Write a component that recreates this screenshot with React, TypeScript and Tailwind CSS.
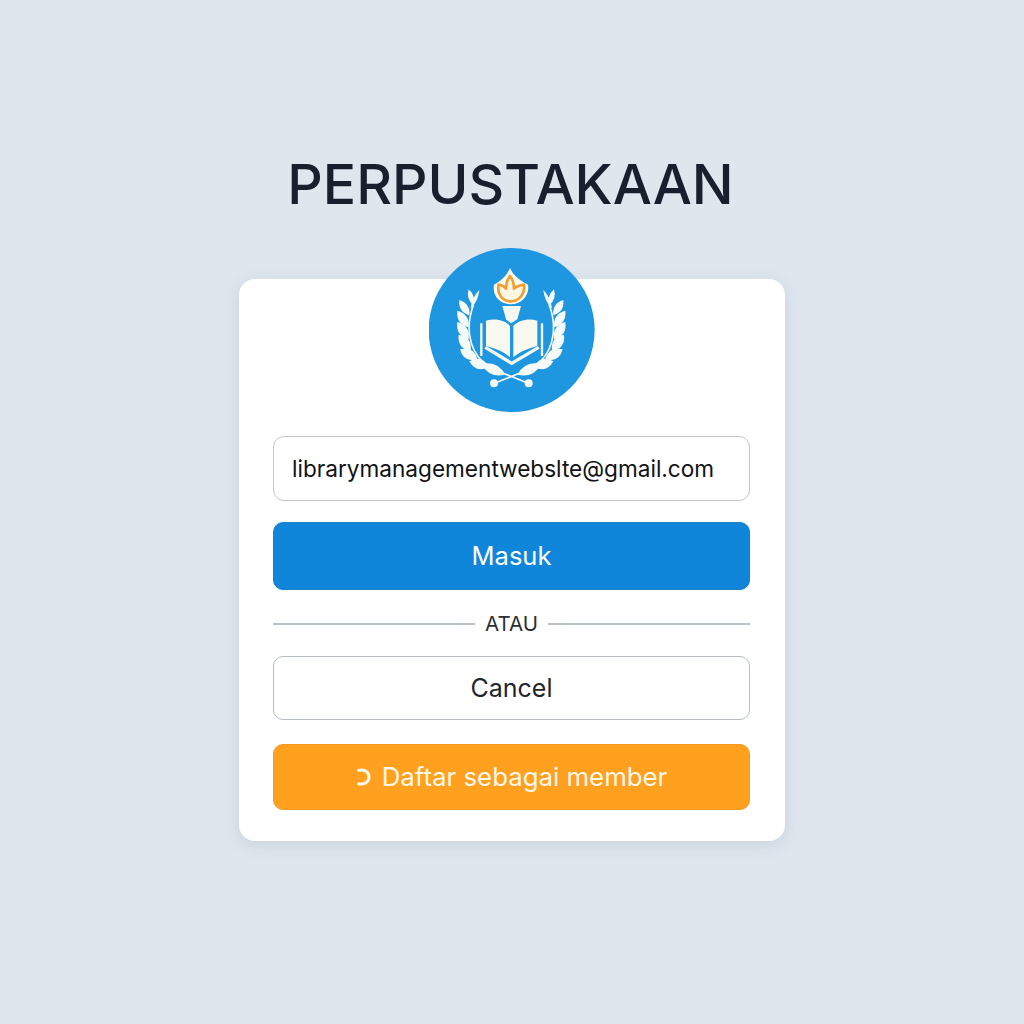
import React from 'react';

// base x, base y, tip x, tip y, half width
const leaves: number[][] = [
  [160, 196, 146, 148, 10],
  [152, 206, 178, 150, 7],
  [148, 226, 118, 180, 14],
  [146, 262, 112, 212, 16],
  [146, 298, 112, 246, 17],
  [152, 332, 116, 284, 18],
  [172, 358, 120, 328, 19],
  [206, 380, 148, 364, 19],
  [256, 404, 184, 372, 19],
];

const leafPath = ([bx, by, tx, ty, w]: number[]) => {
  const mx = (bx + tx) / 2;
  const my = (by + ty) / 2;
  const len = Math.hypot(tx - bx, ty - by);
  const nx = (-(ty - by) / len) * w * 1.6;
  const ny = ((tx - bx) / len) * w * 1.6;
  return `M${bx} ${by} Q${mx + nx} ${my + ny} ${tx} ${ty} Q${mx - nx} ${my - ny} ${bx} ${by} Z`;
};

const Logo: React.FC = () => (
  <svg viewBox="27 24 498 492" className="block h-[164px] w-[166px]">
    <ellipse cx="275" cy="270" rx="249" ry="246" fill="#1f97e0" />
    <path d="M270 84 C280 108 302 122 324 134 C330 165 306 193 272 193 C238 193 216 165 222 134 C244 122 260 108 270 84 Z" fill="#fbfaf0" />
    <path d="M236 134 C246 136 254 140 258 146 C258 130 262 118 270 108 C278 118 282 130 282 146 C288 140 298 136 312 134 C316 160 298 184 272 184 C246 184 230 160 236 134 Z" fill="#fdf6e3" stroke="#f0a030" strokeWidth="8" strokeLinejoin="round" />
    <path d="M247 198 L303 198 L292 238 L273 250 L258 238 Z" fill="#f4f8f0" />
    <path d="M198 242 C225 234 255 240 270 258 L270 352 C255 336 225 325 198 318 Z" fill="#f8faf0" />
    <path d="M280 258 C296 240 326 234 352 242 L352 318 C326 325 296 336 280 352 Z" fill="#f8faf0" />
    <path d="M184 250 L184 348 M366 250 L366 348" stroke="#f4f8f4" strokeWidth="7" fill="none" />
    <path d="M196 322 L275 370 L356 322" stroke="#f4f8f4" strokeWidth="10" fill="none" />
    <g fill="#f6faf6">
      {leaves.map((l, i) => (
        <path key={i} d={leafPath(l)} />
      ))}
      <g transform="matrix(-1 0 0 1 548 0)">
        {leaves.map((l, i) => (
          <path key={i} d={leafPath(l)} />
        ))}
      </g>
    </g>
    <path d="M160 196 C140 250 140 320 190 368 L250 400 L325 430 M388 196 C408 250 408 320 358 368 L298 400 L223 430" stroke="#f6faf6" strokeWidth="5" fill="none" strokeLinecap="round" />
    <circle cx="222" cy="430" r="12" fill="#f6faf6" />
    <circle cx="326" cy="430" r="12" fill="#f6faf6" />
  </svg>
);

export default function App() {
  return (
    <div className="flex min-h-screen flex-col items-center bg-[#dfe6ee] pt-[150px] font-['Inter',sans-serif]">
      <h1 className="mr-[3px] text-[55.3px] leading-[68px] font-medium text-[#17202c]">PERPUSTAKAAN</h1>

      <div className="relative mt-[61px] flex h-[562px] w-[546px] flex-col rounded-2xl bg-white pt-[157px] pr-[35px] pl-[34px] shadow-[0_4px_16px_rgba(100,120,150,0.18)]">
        <div className="absolute top-[-31px] left-[190px]">
          <Logo />
        </div>

        <div className="flex h-[65px] items-center rounded-[11px] border border-[#c2c6cc] bg-white pl-[18px] text-[22.6px] text-[#101317]">
          librarymanagementwebslte@gmail.com
        </div>

        <button className="mt-[21px] h-[68px] rounded-[10px] border border-[#1c7fc8] bg-[#0f86da] text-[25.5px] text-white">Masuk</button>

        <div className="mt-[22px] flex h-[24px] items-center gap-[10px]">
          <div className="h-[2px] flex-1 bg-[#bdc2c9]" />
          <span className="text-[20.5px] text-[#2b3038]">ATAU</span>
          <div className="h-[2px] flex-1 bg-[#bdc2c9]" />
        </div>

        <button className="mt-[20px] h-[64px] rounded-[10px] border border-[#b6bdc8] bg-white pt-[2px] text-[25px] text-[#22262c]">Cancel</button>

        <button className="mt-[24px] flex h-[66px] items-center justify-center gap-[11px] rounded-[10px] border border-[#f59a1f] bg-[#ffa01f] text-[25.8px] text-[#fff8ea]">
          <svg viewBox="0 0 15 18" className="h-[18px] w-[15px]" fill="none">
            <path d="M1.5 2.5 C8 0.5 13 4 13 9 C13 14 8 17.5 1.5 15.5" stroke="#fff8ea" strokeWidth="3" />
          </svg>
          Daftar sebagai member
        </button>
      </div>
    </div>
  );
}
